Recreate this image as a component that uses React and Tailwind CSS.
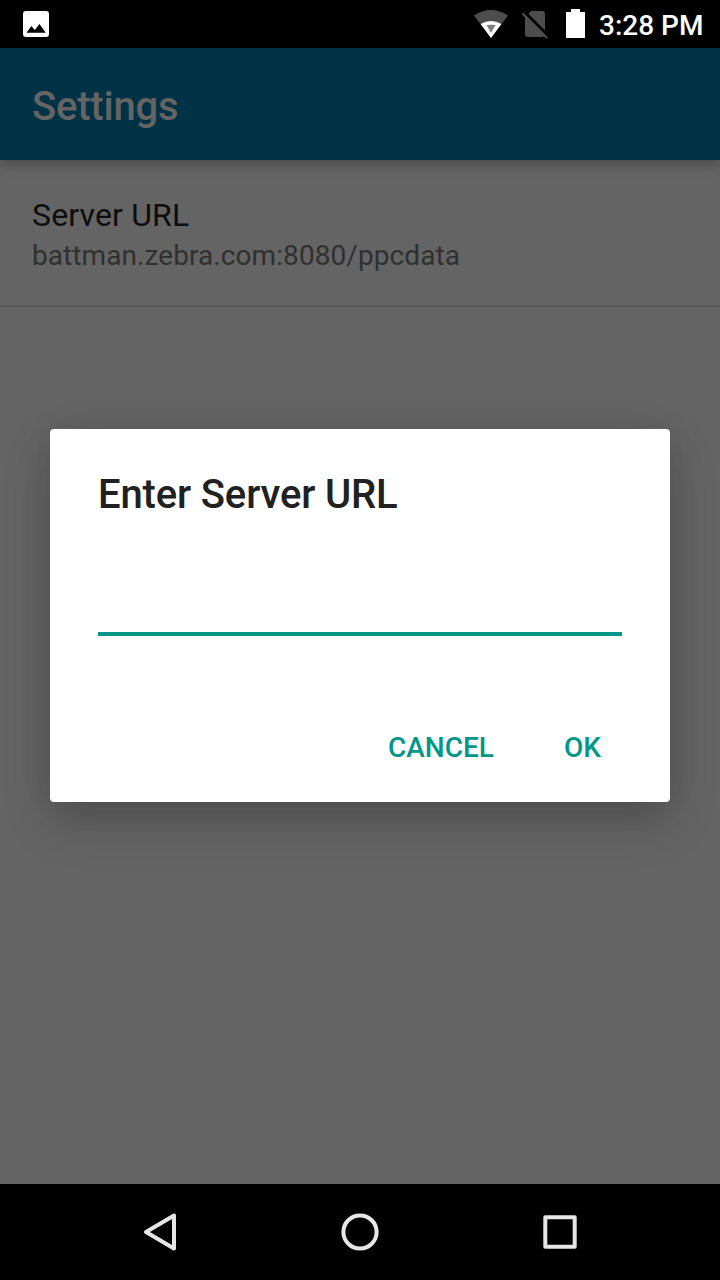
function StatusBar() {
  return (
    <header className="flex h-12 shrink-0 items-center justify-between bg-black pr-4">
      <svg className="h-12 w-[60px]" viewBox="0 0 60 48" aria-hidden="true">
        <path fill="#fff" fillRule="evenodd" d="M26 11h20q3 0 3 3v20q0 3-3 3H26q-3 0-3-3V14q0-3 3-3zM26.5 32.7h19.3L39.4 24l-4.6 6.1-3.4-4.2z" />
      </svg>
      <div className="flex items-center">
        <svg className="h-12 w-[126px]" viewBox="470 0 126 48" aria-hidden="true">
          <path fill="#4d4d4d" d="M474 15.500Q491 4.500 508 15.500L491 38z" />
          <path fill="#fff" d="M480.600 24Q491 17.800 501.400 24L491 38z" />
          <path fill="#808080" d="M486.600 25Q491 24.300 495.600 25L491 33z" />
          <path fill="#4d4d4d" d="M531 11h11q3 0 3 3v20q0 3-3 3h-14q-3 0-3-3V17z" />
          <path stroke="#000" strokeWidth="3" d="M524 11.500l24 24" />
          <path stroke="#4d4d4d" strokeWidth="2.300" d="M522.500 13.500l24.500 24.500" />
          <path fill="#fff" d="M571 9h9v3h5v26h-19V12h5z" />
        </svg>
        <time className="w-[108px] pt-[3px] pl-[3px] text-[28px] leading-[45px] font-medium whitespace-nowrap text-white">3:28 PM</time>
      </div>
    </header>
  );
}

function NavigationBar() {
  return (
    <nav className="flex h-24 shrink-0 items-center justify-center gap-[152px] bg-black">
      <button aria-label="Back">
        <svg className="size-12" viewBox="136 1208 48 48" fill="none" stroke="#e6e6e6" strokeWidth="4" strokeLinejoin="round">
          <path d="M174 1215.500v33L146 1232z" />
        </svg>
      </button>
      <button aria-label="Home">
        <svg className="size-12" viewBox="336 1208 48 48" fill="none" stroke="#e6e6e6" strokeWidth="4">
          <circle cx="360" cy="1232" r="16.600" />
        </svg>
      </button>
      <button aria-label="Overview">
        <svg className="size-12" viewBox="536 1208 48 48" fill="none" stroke="#e6e6e6" strokeWidth="4" strokeLinejoin="round">
          <path d="M545.300 1217.300h29.400v29.400h-29.400z" />
        </svg>
      </button>
    </nav>
  );
}

function UrlDialog() {
  return (
    <section role="dialog" aria-labelledby="dialog-title" className="absolute top-[381px] left-[50px] flex h-[373px] w-[620px] flex-col rounded-[4px] bg-white px-12 shadow-[0_20px_48px_rgba(0,0,0,0.2),0_0_32px_rgba(0,0,0,0.06)]">
      <h2 id="dialog-title" className="pt-[41px] text-[40px] leading-[50px] font-medium tracking-[-0.15px] text-[#212121]">Enter Server URL</h2>
      <input aria-label="Server URL" className="mt-9 h-20 w-full border-b-4 border-[#009688] outline-none" />
      <div className="mt-[77px] flex text-[28px] leading-[70px] font-medium text-[#009688]">
        <button className="ml-[290px] w-[106px] text-left">CANCEL</button>
        <button className="ml-[70px] text-left">OK</button>
      </div>
    </section>
  );
}

export default function App() {
  return (
    <div className="flex h-[1280px] w-[720px] flex-col overflow-hidden font-['Roboto',sans-serif]">
      <StatusBar />
      <main className="relative flex-1 overflow-hidden bg-[#646464]">
        <header className="flex h-28 items-center bg-[#003246] pt-1.5 pl-8 shadow-[0_4px_12px_rgba(0,0,0,0.28)]">
          <h1 className="text-[40px] leading-[48px] font-medium tracking-[-0.2px] text-[#646464]">Settings</h1>
        </header>
        <section className="h-[147px] border-b-2 border-[#575757] pt-9 pl-8">
          <h2 className="text-[32px] leading-[38px] tracking-[0.15px] text-[#0d0d0d]">Server URL</h2>
          <p className="pt-[3px] text-[28px] leading-[38px] tracking-[0.08px] text-[#303030]">battman.zebra.com:8080/ppcdata</p>
        </section>
        <UrlDialog />
      </main>
      <NavigationBar />
    </div>
  );
}
